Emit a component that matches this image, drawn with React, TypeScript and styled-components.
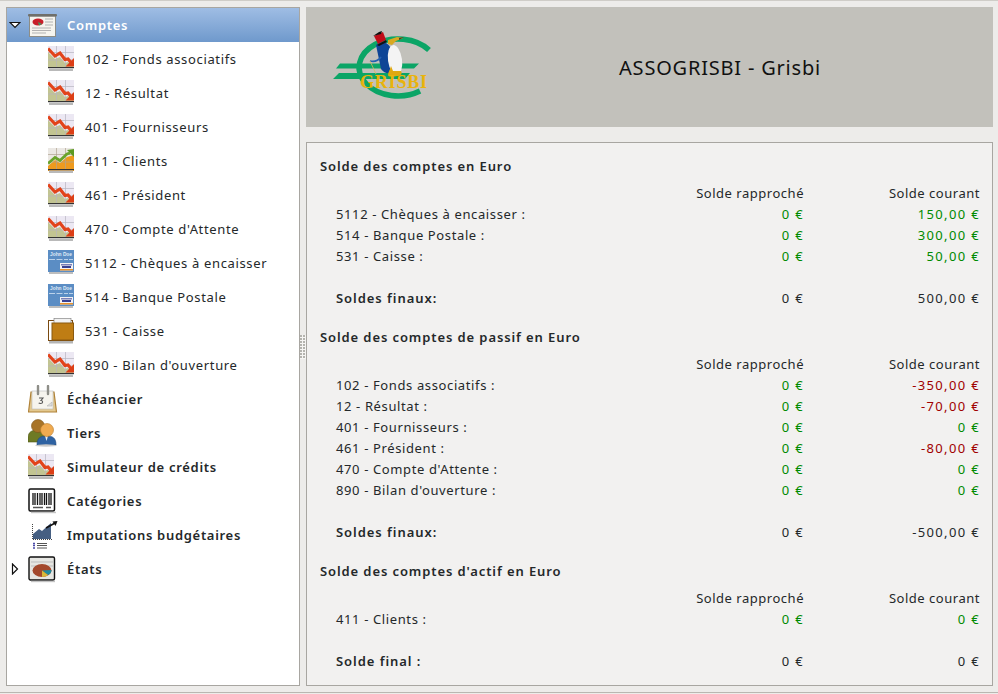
import React, { FC } from 'react';
import styled, { createGlobalStyle } from 'styled-components';

const GlobalStyle = createGlobalStyle`
html, body {
  margin: 0;
  padding: 0;
  background: #edecea;
}
body {
  font-family: "Noto Sans", "DejaVu Sans", sans-serif;
  font-size: 13px;
  color: #24282a;
}
`;

const Window = styled.div`
width: 998px;
height: 693px;
box-sizing: border-box;
padding: 6px 0 0 6px;
display: flex;
align-items: flex-start;
background: #edecea;
border-top: 1px solid #cfcdc8;
border-bottom: 1px solid #b9b7b1;
overflow: hidden;
`;

const Sidebar = styled.div`
width: 294px;
height: 679px;
box-sizing: border-box;
flex: none;
background: #fff;
border: 1px solid #a8a6a1;
`;

const Row = styled.div<{ $selected?: boolean; $child?: boolean }>`
height: 34px;
display: flex;
align-items: center;
padding-left: ${p => (p.$child ? '41px' : '2px')};
font-weight: ${p => (p.$child ? 400 : 600)};
letter-spacing: ${p => (p.$child ? '0.65px' : '0.7px')};
color: ${p => (p.$selected ? '#fff' : '#24282a')};
background: ${p => (p.$selected ? 'linear-gradient(#9fbde4, #6f99cc)' : 'transparent')};
`;

const Expander = styled.div`
width: 11px;
margin-right: 8px;
flex: none;
display: flex;
justify-content: center;
`;

const IconSlot = styled.div<{ $child?: boolean }>`
width: ${p => (p.$child ? '37px' : '39px')};
flex: none;
display: flex;
letter-spacing: 0;
`;

const Handle = styled.div`
width: 6px;
height: 679px;
flex: none;
display: flex;
align-items: center;
justify-content: center;
`;

const HandleDots = styled.div`
width: 6px;
height: 24px;
background: radial-gradient(circle at 1px 1px, #b4b3ae 0.9px, #f6f5f3 1px) 0 0 / 3px 3px;
`;

const Main = styled.div`
width: 687px;
flex: none;
display: flex;
flex-direction: column;
gap: 15px;
`;

const Header = styled.div`
height: 120px;
background: #c2c1bb;
display: flex;
align-items: center;
padding-left: 27px;
`;

const HeaderTitle = styled.div`
flex: 1;
padding-left: 4px;
text-align: center;
font-size: 20px;
letter-spacing: 0.8px;
color: #111;
`;

const Panel = styled.div`
height: 544px;
box-sizing: border-box;
background: #f2f1f0;
border: 1px solid #a8a6a1;
padding: 13px 12px 0 13px;
`;

const SectionTitle = styled.div`
height: 21px;
line-height: 21px;
font-weight: 600;
letter-spacing: 0.9px;
margin-bottom: 6px;
`;

const Section = styled.div`
margin-bottom: 18px;
`;

const TableRow = styled.div`
display: grid;
grid-template-columns: 1fr 130px 176px;
height: 21px;
line-height: 21px;
`;

const Name = styled.div<{ $bold?: boolean }>`
padding-left: 16px;
font-weight: ${p => (p.$bold ? 600 : 400)};
letter-spacing: ${p => (p.$bold ? '0.95px' : '0.62px')};
`;

const Amount = styled.div<{ $tone?: 'pos' | 'neg' }>`
text-align: right;
letter-spacing: 1.35px;
color: ${p => (p.$tone === 'pos' ? '#008a00' : p.$tone === 'neg' ? '#a00000' : '#24282a')};
`;

const ColumnTitle = styled.div`
text-align: right;
letter-spacing: 0.52px;
`;

const Spacer = styled.div`
height: 21px;
`;

const Triangle: FC<{ open?: boolean }> = ({ open }) => (
  <svg width="12" height="12" viewBox="0 0 12 12" style={{ flex: 'none' }}>
    {open ? (
      <path d="M1 3.500h10L6 8.500z" fill="#fff" stroke="#111" strokeWidth="1.200" />
    ) : (
      <path d="M3.500 1v10L8.500 6z" fill="#fff" stroke="#111" strokeWidth="1.200" />
    )}
  </svg>
);

const Shadow = () => <rect x="1" y="22.500" width="24" height="2.500" fill="#b9b9b9" />;

const ChartDown: FC = () => (
  <svg width="26" height="26" viewBox="0 0 26 26">
    <rect x="0" y="0" width="26" height="21" fill="#ece8f3" />
    <path d="M0 6l7 7 5-2 5 6 3-1 6 5H0z" fill="#c2c492" />
    <path d="M8.500 0v21M17.500 0v21M0 6.500h26M0 14h26" stroke="#b8b4be" strokeWidth="0.700" />
    <path d="M0 2.500l7 7.500 5-3 5 6.500 3-.5 3 3.500" fill="none" stroke="#e2431a" strokeWidth="3.200" />
    <path d="M26 12v8.500h-8.500z" fill="#dc3e16" />
    <rect x="0" y="21" width="26" height="1.200" fill="#333" />
    <Shadow />
  </svg>
);

const ChartUp: FC = () => (
  <svg width="26" height="26" viewBox="0 0 26 26">
    <rect x="0" y="0" width="26" height="21" fill="#ebe8e4" />
    <path d="M0 18l7-6 5 3 7-6 7-2v16H0z" fill="#ee9a1e" />
    <path d="M8.500 0v21M17.500 0v21M0 6.500h26M0 14h26" stroke="#b0a490" strokeWidth="0.700" />
    <path d="M0 15.500l7-6 5 3 7-6.500 3-1" fill="none" stroke="#69a42a" strokeWidth="2.800" />
    <path d="M26 1v8l-7-7z" fill="#5c9a22" />
    <rect x="0" y="21" width="26" height="1.200" fill="#333" />
    <Shadow />
  </svg>
);

const CardLabel = styled.text`
font-family: "Liberation Sans", sans-serif;
font-size: 5px;
font-weight: 700;
letter-spacing: 0;
fill: #dfeaf6;
`;

const Card: FC = () => (
  <svg width="26" height="26" viewBox="0 0 26 26">
    <rect x="0" y="0" width="26" height="22" fill="#5b8dc4" />
    <CardLabel x="2" y="6" textLength="22" lengthAdjust="spacingAndGlyphs">John Doe</CardLabel>
    <path d="M1 9.500h6M8.500 9.500h6M16 9.500h4M21 9.500h4" stroke="#bcd2ea" strokeWidth="1.200" />
    <rect x="12" y="13" width="13" height="7.500" fill="#f3f1f4" />
    <rect x="13" y="14" width="11" height="1.500" fill="#7a80b8" />
    <rect x="14" y="16" width="9" height="2" fill="#3a4090" />
    <rect x="12" y="19" width="13" height="1.500" fill="#e8922a" />
    <rect x="1" y="22" width="24" height="2" fill="#bdbdbd" />
  </svg>
);

const Briefcase: FC = () => (
  <svg width="26" height="26" viewBox="0 0 26 26">
    <rect x="0.500" y="2.500" width="24" height="20" fill="#fff" stroke="#7a4a10" />
    <rect x="6" y="0.500" width="17" height="6" fill="#f2f2f2" stroke="#888" strokeWidth="0.700" />
    <rect x="4" y="5" width="21.500" height="17" fill="#bf7d14" stroke="#8a5a10" />
    <rect x="1" y="23" width="24" height="2.500" fill="#b5b5b5" />
  </svg>
);

const Presentation: FC = () => (
  <svg width="29" height="23" viewBox="0 0 29 23">
    <rect x="1.500" y="2" width="26" height="20.500" fill="#f5f4ee" stroke="#8d8d86" />
    <rect x="0" y="0" width="29" height="2.500" rx="1" fill="#6f6f6a" />
    <ellipse cx="10" cy="8" rx="5.500" ry="3.400" fill="#c8202a" />
    <path d="M10 8l4 2-3 1.500z" fill="#3f9a60" />
    <path d="M17 5h8M17 8h8M17 11h8M4 14h19M4 16.500h19M4 19h14" stroke="#aaa" strokeWidth="0.900" />
  </svg>
);

const Calendar: FC = () => (
  <svg width="30" height="29" viewBox="0 0 30 29">
    <path d="M3 7h23l2.500 20H.500z" fill="#e3c88e" stroke="#b08238" strokeWidth="1.200" />
    <rect x="4" y="6" width="21" height="18" fill="#f6f4ee" stroke="#bbb" strokeWidth="0.600" />
    <path d="M10 1v8M20 1v8" stroke="#8e8e88" strokeWidth="2.400" strokeLinecap="round" />
    <path d="M11 13h4l-2 2.500c2 0 2.500 3-.5 3-1 0-1.500-.3-1.800-.6" fill="none" stroke="#555" strokeWidth="1.100" />
    <path d="M19 21l5-4v4z" fill="#ddd" stroke="#aaa" strokeWidth="0.500" />
  </svg>
);

const People: FC = () => (
  <svg width="30" height="28" viewBox="0 0 30 28">
    <path d="M0 19c0-6 4-8 9-8s8 2 8 8v4H0z" fill="#6e7a24" stroke="#4f5818" strokeWidth="0.600" />
    <circle cx="10" cy="7" r="6.500" fill="#a87428" stroke="#7a5218" strokeWidth="0.600" />
    <path d="M9 26c0-7 3-9 9.500-9s9.500 2 9.500 9z" fill="#2e62a2" stroke="#204a80" strokeWidth="0.600" />
    <path d="M17 17h3l-1.500 5z" fill="#e8eef6" />
    <circle cx="19" cy="11" r="6.500" fill="#efaa50" stroke="#b87a28" strokeWidth="0.600" />
    <ellipse cx="18" cy="26.500" rx="11" ry="1.200" fill="#c9c9c9" />
  </svg>
);

const Barcode: FC = () => (
  <svg width="28" height="26" viewBox="0 0 28 26">
    <rect x="1" y="1" width="25.500" height="22" rx="1.500" fill="#fff" stroke="#111" strokeWidth="1.500" />
    <path d="M5 5v12M7 5v12M9.500 5v12M12 5v12M14 5v12M16.500 5v12M18.500 5v12M21 5v12M23 5v12" stroke="#111" strokeWidth="1.300" />
    <path d="M5 19.500h10M18 19.500h5" stroke="#555" strokeWidth="1.400" />
    <path d="M3 24.500h25" stroke="#c4c4c4" strokeWidth="1.400" />
  </svg>
);

const Budget: FC = () => (
  <svg width="30" height="30" viewBox="0 0 30 30">
    <path d="M5 19v-5l6-5 3 2 9-8v16z" fill="#465f82" />
    <path d="M18 8L28 2.500" stroke="#111" strokeWidth="1.500" />
    <path d="M29.500 1l-2 5-3-4.500z" fill="#111" />
    <path d="M4.500 4v15.500h20" fill="none" stroke="#444" strokeWidth="1" strokeDasharray="1 1" />
    <path d="M9 23.500h10M9 25.500h10M9 28h10" stroke="#555" strokeWidth="1" />
    <path d="M5 23.500h2M5 25.500h2M5 28h2" stroke="#4a4aa8" strokeWidth="1.400" />
  </svg>
);

const Report: FC = () => (
  <svg width="28" height="27" viewBox="0 0 28 27">
    <rect x="1" y="1" width="25.500" height="23" rx="1.500" fill="#e6e6e2" stroke="#111" strokeWidth="1.400" />
    <path d="M3 6h22M3 10h22" stroke="#bbb" strokeWidth="1" />
    <ellipse cx="14" cy="14.500" rx="9.500" ry="6.500" fill="#a3482c" />
    <path d="M14 14.500l9.500-.5c0 2-1 4-3.500 5z" fill="#1f8aa0" />
    <path d="M14 14.500l6 4.500c-2 1.500-4 1.900-6 2z" fill="#d8b83a" />
    <path d="M3 25.500h24" stroke="#c4c4c4" strokeWidth="1.400" />
  </svg>
);

const LogoText = styled.text`
font-family: "Liberation Serif", serif;
font-weight: 700;
font-size: 18px;
letter-spacing: 0.8px;
fill: #e9b30c;
`;

const Logo: FC = () => (
  <svg width="110" height="76" viewBox="0 0 110 76" style={{ flex: 'none' }}>
    <path d="M96 21A39 28.500 0 1 0 87 62" fill="none" stroke="#0ba566" strokeWidth="5.500" />
    <path d="M7 34.500h79l-5 5H3zM6 44h71l-5 6H0z" fill="#0ba566" />
    <path d="M55 11l9-3 6 1-7 3-4 4-4-1z" fill="#d8a820" />
    <path d="M66 9l5-1-5 3z" fill="#5a3a20" />
    <path d="M43 16c6-5 13-3 16 6l5 18c-4 5-12 6-16 0z" fill="#0e4596" />
    <ellipse cx="62" cy="31" rx="7" ry="15" transform="rotate(-8 62 31)" fill="#f4f4f4" />
    <path d="M37 32c4 1 8 0 11-4" fill="none" stroke="#2360b0" strokeWidth="1.800" />
    <path d="M37 32l6 13" stroke="#d8b860" strokeWidth="0.800" />
    <path d="M58 37l2 5 8 0c2 3-1 5-4 5-5 1-9 1-9-1 0-3 2-5 3-9z" fill="#e0a810" />
    <path d="M41 7l9-4 3 8-8 4z" fill="#c00c18" />
    <path d="M40 7l6-4 3-1-1 3zM44 16l9-5 1 2-8 4z" fill="#111" />
    <LogoText x="27" y="59">GRISBI</LogoText>
  </svg>
);

type Tone = 'pos' | 'neg' | undefined;
interface Line {
  name: string;
  a: string;
  b: string;
  tb: Tone;
}

const toneOf = (v: string): Tone => (v.startsWith('-') ? 'neg' : 'pos');

const line = (name: string, b: string): Line => ({ name, a: '0 €', b, tb: toneOf(b) });

const sections = [
  {
    title: 'Solde des comptes en Euro',
    total: 'Soldes finaux:',
    sum: '500,00 €',
    lines: [
      line('5112 - Chèques à encaisser :', '150,00 €'),
      line('514 - Banque Postale :', '300,00 €'),
      line('531 - Caisse :', '50,00 €'),
    ],
  },
  {
    title: 'Solde des comptes de passif en Euro',
    total: 'Soldes finaux:',
    sum: '-500,00 €',
    lines: [
      line('102 - Fonds associatifs :', '-350,00 €'),
      line('12 - Résultat :', '-70,00 €'),
      line('401 - Fournisseurs :', '0 €'),
      line('461 - Président :', '-80,00 €'),
      line("470 - Compte d'Attente :", '0 €'),
      line("890 - Bilan d'ouverture :", '0 €'),
    ],
  },
  {
    title: "Solde des comptes d'actif en Euro",
    total: 'Solde final :',
    sum: '0 €',
    lines: [line('411 - Clients :', '0 €')],
  },
];

const accounts: [string, FC][] = [
  ['102 - Fonds associatifs', ChartDown],
  ['12 - Résultat', ChartDown],
  ['401 - Fournisseurs', ChartDown],
  ['411 - Clients', ChartUp],
  ['461 - Président', ChartDown],
  ["470 - Compte d'Attente", ChartDown],
  ['5112 - Chèques à encaisser', Card],
  ['514 - Banque Postale', Card],
  ['531 - Caisse', Briefcase],
  ["890 - Bilan d'ouverture", ChartDown],
];

const pages: [string, FC, boolean][] = [
  ['Échéancier', Calendar, false],
  ['Tiers', People, false],
  ['Simulateur de crédits', ChartDown, false],
  ['Catégories', Barcode, false],
  ['Imputations budgétaires', Budget, false],
  ['États', Report, true],
];

export default function App() {
  return (
    <>
      <GlobalStyle />
      <Window>
        <Sidebar>
          <Row $selected>
            <Expander><Triangle open /></Expander>
            <IconSlot><Presentation /></IconSlot>
            Comptes
          </Row>
          {accounts.map(([label, Icon]) => (
            <Row $child key={label}>
              <IconSlot $child><Icon /></IconSlot>
              {label}
            </Row>
          ))}
          {pages.map(([label, Icon, expandable]) => (
            <Row key={label}>
              <Expander>{expandable && <Triangle />}</Expander>
              <IconSlot><Icon /></IconSlot>
              {label}
            </Row>
          ))}
        </Sidebar>
        <Handle><HandleDots /></Handle>
        <Main>
          <Header>
            <Logo />
            <HeaderTitle>ASSOGRISBI - Grisbi</HeaderTitle>
          </Header>
          <Panel>
            {sections.map(s => (
              <Section key={s.title}>
                <SectionTitle>{s.title}</SectionTitle>
                <TableRow>
                  <div />
                  <ColumnTitle>Solde rapproché</ColumnTitle>
                  <ColumnTitle>Solde courant</ColumnTitle>
                </TableRow>
                {s.lines.map(l => (
                  <TableRow key={l.name}>
                    <Name>{l.name}</Name>
                    <Amount $tone="pos">{l.a}</Amount>
                    <Amount $tone={l.tb}>{l.b}</Amount>
                  </TableRow>
                ))}
                <Spacer />
                <TableRow>
                  <Name $bold>{s.total}</Name>
                  <Amount>0 €</Amount>
                  <Amount>{s.sum}</Amount>
                </TableRow>
              </Section>
            ))}
          </Panel>
        </Main>
      </Window>
    </>
  );
}
